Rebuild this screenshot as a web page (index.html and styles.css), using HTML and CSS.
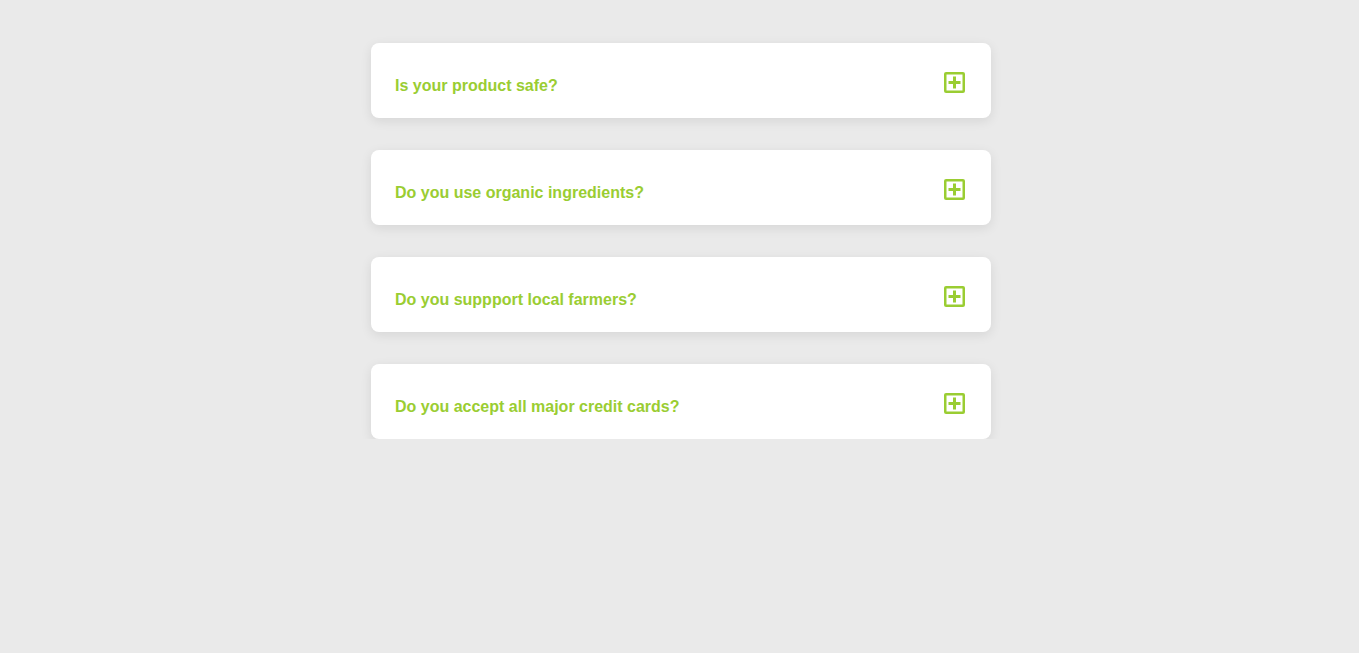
FILE: index.html
```html
<!DOCTYPE html>
<html>
<head>
<meta charset="utf-8">
<link rel="stylesheet" href="styles.css">
</head>
<body>
<div class="faq">
  <div class="card">
    <h3 class="q">Is your product safe?</h3>
    <svg class="icon" width="21" height="21" viewBox="0 0 21 21"><rect x="1.25" y="1.25" width="18.5" height="18.5" rx="0.8" fill="none" stroke="#9acd32" stroke-width="2.5"/><path d="M10.5 4.5v12M4.5 10.5h12" stroke="#9acd32" stroke-width="3"/></svg>
  </div>
  <div class="card">
    <h3 class="q">Do you use organic ingredients?</h3>
    <svg class="icon" width="21" height="21" viewBox="0 0 21 21"><rect x="1.25" y="1.25" width="18.5" height="18.5" rx="0.8" fill="none" stroke="#9acd32" stroke-width="2.5"/><path d="M10.5 4.5v12M4.5 10.5h12" stroke="#9acd32" stroke-width="3"/></svg>
  </div>
  <div class="card">
    <h3 class="q">Do you suppport local farmers?</h3>
    <svg class="icon" width="21" height="21" viewBox="0 0 21 21"><rect x="1.25" y="1.25" width="18.5" height="18.5" rx="0.8" fill="none" stroke="#9acd32" stroke-width="2.5"/><path d="M10.5 4.5v12M4.5 10.5h12" stroke="#9acd32" stroke-width="3"/></svg>
  </div>
  <div class="card">
    <h3 class="q">Do you accept all major credit cards?</h3>
    <svg class="icon" width="21" height="21" viewBox="0 0 21 21"><rect x="1.25" y="1.25" width="18.5" height="18.5" rx="0.8" fill="none" stroke="#9acd32" stroke-width="2.5"/><path d="M10.5 4.5v12M4.5 10.5h12" stroke="#9acd32" stroke-width="3"/></svg>
  </div>
</div>
</body>
</html>
```
FILE: styles.css
```css
html, body {
  margin: 0;
  padding: 0;
  background: #eaeaea;
  font-family: "Liberation Sans", Arial, sans-serif;
}
.faq {
  width: 620px;
  margin: 43px 0 0 calc(50% - 308.5px);
  display: flex;
  flex-direction: column;
  gap: 32px;
}
.card {
  background: #fff;
  border-radius: 8px;
  box-shadow: 0 3px 12px rgba(0, 0, 0, 0.09);
  padding: 29px 26px 23px 24px;
  display: flex;
  justify-content: space-between;
  align-items: flex-start;
}
.q {
  margin: 4px 0 0;
  font-size: 16px;
  line-height: 19px;
  font-weight: bold;
  color: #9acd32;
}
.icon {
  display: block;
  flex: none;
}
```
